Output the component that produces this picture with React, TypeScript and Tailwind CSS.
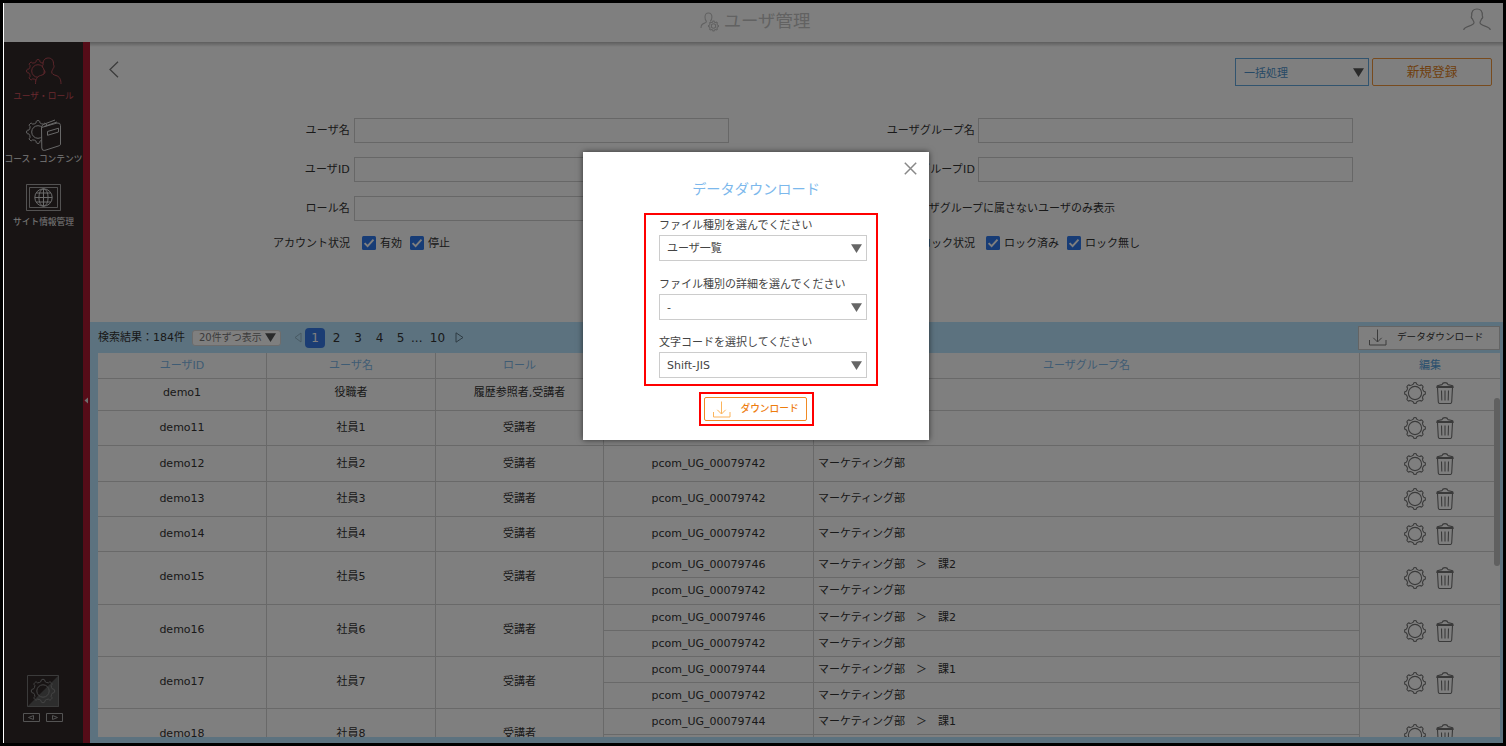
import React from "react";

type Group = { id: string; name: string };
type Row = { id: string; name: string; role: string; height: string; groups: Group[] };

const mk: Group = { id: "pcom_UG_00079742", name: "マーケティング部" };
const mk2: Group = { id: "pcom_UG_00079746", name: "マーケティング部　＞　課2" };
const mk1: Group = { id: "pcom_UG_00079744", name: "マーケティング部　＞　課1" };

const rows: Row[] = [
  { id: "demo1", name: "役職者", role: "履歴参照者,受講者", height: "h-[32px]", groups: [mk] },
  { id: "demo11", name: "社員1", role: "受講者", height: "h-[35px]", groups: [mk] },
  { id: "demo12", name: "社員2", role: "受講者", height: "h-[36px]", groups: [mk] },
  { id: "demo13", name: "社員3", role: "受講者", height: "h-[35px]", groups: [mk] },
  { id: "demo14", name: "社員4", role: "受講者", height: "h-[35px]", groups: [mk] },
  { id: "demo15", name: "社員5", role: "受講者", height: "h-[53px]", groups: [mk2, mk] },
  { id: "demo16", name: "社員6", role: "受講者", height: "h-[52px]", groups: [mk2, mk] },
  { id: "demo17", name: "社員7", role: "受講者", height: "h-[52px]", groups: [mk1, mk] },
  { id: "demo18", name: "社員8", role: "受講者", height: "h-[53px]", groups: [mk1, mk] },
];

function gearPath(cx: number, cy: number, r: number, teeth: number, depth: number) {
  const pts: string[] = [];
  const step = (Math.PI * 2) / teeth;
  const at = (a: number, rad: number) =>
    `${(cx + Math.sin(a) * rad).toFixed(2)} ${(cy - Math.cos(a) * rad).toFixed(2)}`;
  for (let i = 0; i < teeth; i++) {
    const a = i * step;
    pts.push(`${i ? "L" : "M"}${at(a - step * 0.13, r)}`);
    pts.push(`Q${at(a, r + depth * 0.1)} ${at(a + step * 0.13, r)}`);
    pts.push(`Q${at(a + step * 0.22, r - depth * 0.1)} ${at(a + step * 0.24, r - depth * 0.8)}`);
    pts.push(`Q${at(a + step * 0.5, r - depth * 1.3)} ${at(a + step * 0.76, r - depth * 0.8)}`);
    pts.push(`Q${at(a + step * 0.78, r - depth * 0.1)} ${at(a + step * 0.87, r)}`);
  }
  return pts.join("") + "Z";
}

const smallGear = gearPath(11, 11, 10.3, 8, 1.6);
const sideGear = gearPath(16, 16, 11.6, 8, 2.2);
const menuGear = gearPath(12, 13, 11.3, 8, 2.2);

function Gear() {
  return (
    <svg width="22" height="22" viewBox="0 0 22 22" fill="none" stroke="#747474" strokeWidth="1.100" strokeLinejoin="round">
      <path d={smallGear} />
      <circle cx="11" cy="11" r="6.600" />
    </svg>
  );
}

function Trash() {
  return (
    <svg width="18" height="22" viewBox="0 0 18 22" fill="none" stroke="#747474" strokeWidth="1.100" strokeLinejoin="round">
      <path d="M.8 5.500 1.200 3.800 6 2.600Q6.500.6 9 .6t3 2l4.800 1.200.4 1.700ZM1 4.500h16M1.500 5.600 2.300 20q.1 1.500 1.600 1.500h10.200q1.500 0 1.600-1.500l.8-14.400M5.500 8.500l.3 10M9 8.500v10M12.500 8.500l-.3 10" />
    </svg>
  );
}

function DownloadIcon({ color }: { color: string }) {
  return (
    <svg width="18" height="17" viewBox="0 0 18 17" fill="none" stroke={color} strokeWidth="1">
      <path d="M.5 11v5h16.500v-5M8.500.5v12.300M4.300 8.800l4.200 4.200 4.200-4.200" />
    </svg>
  );
}

function Triangle({ className }: { className?: string }) {
  return (
    <svg className={className} width="11" height="9" viewBox="0 0 11 9" fill="currentColor">
      <path d="M0 .3h11L5.500 9Z" />
    </svg>
  );
}

function Check() {
  return (
    <svg className="mb-[2px]" width="14" height="14" viewBox="0 0 14 14">
      <rect width="14" height="14" rx="1.500" fill="#2f78ec" />
      <path d="m2.600 7.200 3 3 5.900-6.600" fill="none" stroke="#fff" strokeWidth="1.900" />
    </svg>
  );
}

function Field({ label, wide }: { label: string; wide?: boolean }) {
  return (
    <div className="flex h-[25px] items-center">
      <span className={`pt-[2px] text-right tracking-[0.15px] ${wide ? "w-[246px]" : "w-[260px]"}`}>{label}</span>
      <span className={`${wide ? "ml-[3px]" : "ml-[4px]"} h-[25px] w-[375px] border border-[#cfcfcf]`} />
    </div>
  );
}

function SideItem({ label, className, children }: { label: string; className?: string; children: React.ReactNode }) {
  return (
    <div className={`flex w-full flex-col items-center ${className ?? ""}`}>
      {children}
      <span className="whitespace-nowrap text-[8.7px] leading-[12px]">{label}</span>
    </div>
  );
}

function Sidebar() {
  return (
    <aside className="flex w-[79px] flex-col items-center bg-[#302828] text-[#f4f4f4]">
      <SideItem label="ユーザ・ロール" className="mt-[15px] gap-[5px] text-[#d0525e]">
        <svg width="36" height="28" viewBox="0 0 36 28" fill="none" stroke="currentColor" strokeOpacity=".85" strokeWidth="1">
          <path d={menuGear} transform="translate(0 1)" />
          <circle cx="12" cy="14" r="6.300" />
          <path
            fill="#302828"
            stroke="none"
            d="M9.500 28c0-5.300 1.300-8.500 5-9.500 2.500-.7 4.500-1.400 4.500-3.500 0-1.200-1-2-1.600-3.600-1.200-1.200-1-2.800-.3-3.700C16.700 3.500 18.800 1 22.300 1H36v27Z"
          />
          <path d="M9.500 27c0-4.300 1.300-7.500 5-8.500 2.500-.7 4.500-1.400 4.500-3.500 0-1.200-1-2-1.600-3.600-1.200-1.200-1-2.800-.3-3.700C16.700 3.500 18.800 1 22.300 1s5.500 2.500 5.200 6.700c.7.900.8 2.500-.3 3.700-.6 1.600-1.500 2.400-1.500 3.600 0 2.100 2 2.800 4.300 3.500 3.700 1 5 4.200 5 8.500" />
        </svg>
      </SideItem>
      <SideItem label="コース・コンテンツ" className="mt-[17px] gap-[2px]">
        <svg width="36" height="32" viewBox="0 0 36 32" fill="none" stroke="#d0d0d0" strokeWidth="1" strokeLinejoin="round">
          <path d={menuGear} />
          <circle cx="12" cy="13" r="6.300" />
          <path fill="#302828" d="M15.500 8.500 31 4q3.500-.5 3.500 2.500v18.700q0 1-1.200 1.500l-14.500 4.700q-3 .6-3-2.400Z" />
          <path d="M15.600 8.500q-.1-2.200 2.200-3.200L29 1M18 7.500 31 3M21.500 12.500l11-3.300v3.800l-11 3.300Z" />
        </svg>
      </SideItem>
      <SideItem label="サイト情報管理" className="mt-[19px] gap-[5px]">
        <svg width="35" height="27" viewBox="0 0 35 27" fill="none" stroke="#d8d8d8" strokeWidth="1">
          <path strokeOpacity=".7" d="M.5.5h34v26H.5ZM3.500 3.500h28v20h-28Z" />
          <circle cx="17.500" cy="13.500" r="8.700" />
          <ellipse cx="17.500" cy="13.500" rx="4.600" ry="8.700" />
          <path d="M17.500 4.800v17.400M8.800 13.500h17.400M10.300 9h14.400M10.300 18h14.400" />
        </svg>
      </SideItem>
      <div className="mt-auto mr-[2px] mb-[21px] flex flex-col items-center">
        <svg width="32" height="32" viewBox="0 0 32 32" fill="none" stroke="#777" strokeWidth="1">
          <path d="M32 0v32H0Z" fill="#5a5a5a" stroke="none" />
          <path d="M.5.5h31v31H.5Z" />
          <path d={sideGear} stroke="#8a8a8a" />
          <circle cx="16" cy="16" r="6.200" stroke="#8a8a8a" />
        </svg>
        <div className="mt-[6px] flex gap-[6px]">
          <svg width="17" height="9" viewBox="0 0 17 9" fill="none" stroke="#a8a8a8" strokeWidth="1"><path d="M.5.5h16v8H.5ZM10.500 2.500v4l-5-2Z" /></svg>
          <svg width="17" height="9" viewBox="0 0 17 9" fill="none" stroke="#a8a8a8" strokeWidth="1"><path d="M.5.5h16v8H.5ZM6.500 2.500v4l5-2Z" /></svg>
        </div>
      </div>
    </aside>
  );
}

function Results() {
  const cols = "grid grid-cols-[169px_169px_168px_210px_546px_140px]";
  return (
    <section className="relative flex h-[421px] flex-col bg-[#b9e5ff] pr-[3px] pl-[8px]">
      <div className="flex h-[31px] items-center">
        <span className="w-[94px] whitespace-nowrap pt-[2px]">検索結果：184件</span>
        <span className="flex h-[16px] w-[89px] items-center justify-between rounded-[3px] border border-[#d8d8d8] bg-white pr-[4px] pl-[6px] text-[10px] text-[#777]">
          20件ずつ表示
          <Triangle className="text-[#555]" />
        </span>
        <svg className="ml-[13px]" width="8" height="11" viewBox="0 0 8 11" fill="none" stroke="#8fb2c6"><path d="M7 1v9L1 5.500Z" /></svg>
        <div className="ml-[3px] flex text-[12px] leading-[20px]">
          <span className="w-[20px] rounded-[4px] bg-[#367be8] text-center text-white">1</span>
          <span className="ml-[1px] w-[21px] text-center">2</span>
          <span className="w-[22px] text-center">3</span>
          <span className="w-[21px] text-center">4</span>
          <span className="w-[21px] text-center">5</span>
          <span className="w-[11px] text-center">...</span>
          <span className="w-[31px] text-center">10</span>
        </div>
        <svg className="ml-[2px]" width="9" height="11" viewBox="0 0 9 11" fill="none" stroke="#5c7685"><path d="M1 .8v9.400l7-4.700Z" /></svg>
        <button className="ml-auto flex h-[24px] w-[142px] items-center border border-[#c8c8c8] bg-white pl-[10px] text-[9.600px]">
          <DownloadIcon color="#777" />
          <span className="ml-[10px]">データダウンロード</span>
        </button>
      </div>
      <div className="h-[384px] overflow-hidden bg-white">
        <div className={`${cols} h-[26px] border-b border-[#d2d2d2] text-center leading-[26px] text-[#7fb8e8]`}>
          <span className="border-r border-[#d2d2d2]">ユーザID</span>
          <span className="border-r border-[#d2d2d2]">ユーザ名</span>
          <span className="border-r border-[#d2d2d2]">ロール</span>
          <span className="border-r border-[#d2d2d2]" />
          <span className="border-r border-[#d2d2d2]">ユーザグループ名</span>
          <span className="text-[#559fdc]">編集</span>
        </div>
        {rows.map((r) => (
          <div key={r.id} className={`${cols} ${r.height} border-b border-[#d2d2d2]`}>
            {[r.id, r.name, r.role].map((t) => (
              <span
                key={t}
                className={`flex items-center justify-center border-r border-[#d2d2d2] ${r.id === "demo1" ? "pb-[2px]" : r.groups.length > 1 ? "pb-[1px]" : "pt-[1px]"}`}
              >
                {t}
              </span>
            ))}
            <div className="col-span-2 flex min-h-0 flex-col">
              {r.groups.map((g, i) => (
                <div
                  key={g.id}
                  className={`grid grid-cols-[210px_546px] ${i === 0 && r.groups.length > 1 ? "h-[26px] border-b border-[#d2d2d2]" : "flex-1"}`}
                >
                  <span className="flex items-center justify-center border-r border-[#d2d2d2] pt-[1px]">{g.id}</span>
                  <span className="flex items-center border-r border-[#d2d2d2] pt-[1px] pl-[4px]">{g.name}</span>
                </div>
              ))}
            </div>
            <span className={`flex items-center justify-center gap-[10px] pr-[3px] ${r.id === "demo1" ? "pb-[3px]" : ""}`}>
              <Gear />
              <Trash />
            </span>
          </div>
        ))}
      </div>
      <span className="absolute top-[76px] right-[3px] h-[168px] w-[6px] rounded-full bg-[#c0c0c0]" />
    </section>
  );
}

function Select({ label, value, className }: { label: string; value: string; className?: string }) {
  return (
    <div className={`flex flex-col ${className ?? ""}`}>
      <span className="h-[20px] text-[11px] leading-[22px]">{label}</span>
      <span className="flex h-[26px] items-center justify-between border border-[#ccc] pr-[4px] pl-[7px]">
        <span className="pt-[2px]">{value}</span>
        <Triangle className="text-[#666]" />
      </span>
    </div>
  );
}

function Modal() {
  return (
    <div className="absolute top-[149px] left-[579px] flex h-[288px] w-[346px] flex-col items-center bg-white text-[11px] text-[#444] shadow-[0_0_6px_rgba(0,0,0,0.6)]">
      <svg className="mt-[10px] mr-[12px] self-end" width="13" height="13" viewBox="0 0 13 13" fill="none" stroke="#888" strokeWidth="1.500">
        <path d="m.8.800 11.400 11.400M12.200.800.8 12.200" />
      </svg>
      <h2 className="mt-[4px] text-[14.2px] leading-[20px] text-[#7cb8ec]">データダウンロード</h2>
      <div className="mt-[14px] ml-[10px] h-[173px] w-[234px] border-2 border-[#f00] pr-[9px] pl-[13px]">
        <Select label="ファイル種別を選んでください" value="ユーザ一覧" />
        <Select label="ファイル種別の詳細を選んでください" value="-" className="mt-[13px]" />
        <Select label="文字コードを選択してください" value="Shift-JIS" className="mt-[12px]" />
      </div>
      <div className="mt-[6px] flex h-[34px] w-[115px] items-center justify-center border-2 border-[#f00]">
        <button className="mr-[2px] flex h-[24px] w-[103px] items-center rounded-[2px] border border-[#f08a24] pl-[8px] text-[9.700px] font-medium text-[#ee7c0e]">
          <DownloadIcon color="#fbb45c" />
          <span className="ml-[10px]">ダウンロード</span>
        </button>
      </div>
    </div>
  );
}

export default function App() {
  return (
    <div className="h-[746px] w-[1506px] overflow-hidden border-[3px] border-black bg-white text-[11px] text-[#333] [font-family:'DejaVu_Sans','Noto_Sans_CJK_JP',sans-serif]">
      <div className="relative flex h-[740px] w-[1500px] flex-col border-l border-white bg-white">
        <header className="flex h-[39px] items-center pr-[12px]">
          <div className="flex flex-1 items-center justify-center pb-[3px] pl-[43px] text-[#c4c4c4]">
            <svg className="mt-[2px]" width="20" height="20" viewBox="0 0 20 20" fill="none" stroke="currentColor" strokeWidth="1.100">
              <path d="M1 16c0-2.500 1-4 3-4.600 1.700-.5 2.500-1 2.300-2.200C5 8 5 7 5 5 5 2.500 6.300 1 8.400 1s3.500 1.500 3.500 4c0 2-.3 3-1.500 4.200" />
              <path d={gearPath(13.5, 14, 5, 8, 1)} />
              <circle cx="13.500" cy="14" r="2.200" />
            </svg>
            <h1 className="ml-[4px] text-[17.400px] leading-[24px]">ユーザ管理</h1>
          </div>
          <svg className="mt-[-7px]" width="28" height="23" viewBox="0 0 28 23" fill="none" stroke="#a6a6a6" strokeWidth="1.200">
            <path d="M.7 22c.3-2.400 2.300-3 5.300-3.900 3-.9 5-1.700 5-3.600 0-1.100-.9-1.600-1.500-3.500-1.200-.9-1.400-2.300-.8-3.300C8.400 3.200 10.300 1 14 1s5.600 2.200 5.300 6.700c.6 1 .4 2.400-.8 3.300-.6 1.900-1.500 2.400-1.500 3.500 0 1.900 2 2.700 5 3.600s5 1.500 5.300 3.900" />
          </svg>
        </header>
        <div className="flex h-[701px]">
          <Sidebar />
          <div className="flex w-[7px] items-center bg-[#aa1830] pt-[16px]">
            <svg width="6" height="7" viewBox="0 0 6 7" fill="#ddd"><path d="M5 .5v6L1.500 3.500Z" /></svg>
          </div>
          <main className="flex w-[1413px] flex-col">
            <div className="h-[5px] bg-linear-to-b from-[#bcbcbc] to-white" />
            <div className="flex h-[39px] items-end pr-[11px]">
              <svg className="mb-[8px] ml-[19px]" width="10" height="17" viewBox="0 0 10 17" fill="none" stroke="#777" strokeWidth="1.300">
                <path d="M9 .8 1 8.500l8 7.700" />
              </svg>
              <span className="ml-auto flex h-[28px] w-[134px] items-center justify-between border border-[#62a8de] pr-[4px] pl-[8px] text-[#4d93cc]">
                <span className="pt-[4px]">一括処理</span>
                <Triangle className="text-[#555]" />
              </span>
              <button className="ml-[3px] h-[28px] w-[120px] rounded-[2px] border border-[#f0963c] pb-[1px] text-[12.700px] text-[#e07f20]">新規登録</button>
            </div>
            <div className="mt-[32px] flex h-[204px]">
              <div className="flex flex-col gap-[14px]">
                <Field label="ユーザ名" />
                <Field label="ユーザID" />
                <Field label="ロール名" />
                <div className="flex items-center pt-px">
                  <span className="w-[260px] text-right">アカウント状況</span>
                  <span className="ml-[12px] flex items-center gap-[4px]"><Check />有効</span>
                  <span className="ml-[8px] flex items-center gap-[4px]"><Check />停止</span>
                </div>
              </div>
              <div className="flex flex-col gap-[14px]">
                <Field label="ユーザグループ名" wide />
                <Field label="ユーザグループID" wide />
                <div className="flex h-[25px] items-center pt-[2px] pl-[160px]">
                  <Check />
                  <span className="ml-[4px]">ユーザグループに属さないユーザのみ表示</span>
                </div>
                <div className="flex items-center pt-px">
                  <span className="w-[246px] text-right">ロック状況</span>
                  <span className="ml-[11px] flex items-center gap-[4px]"><Check />ロック済み</span>
                  <span className="ml-[8px] flex items-center gap-[4px]"><Check />ロック無し</span>
                </div>
              </div>
            </div>
            <Results />
          </main>
        </div>
        <div className="absolute inset-0 bg-black/50" />
        <Modal />
      </div>
    </div>
  );
}
